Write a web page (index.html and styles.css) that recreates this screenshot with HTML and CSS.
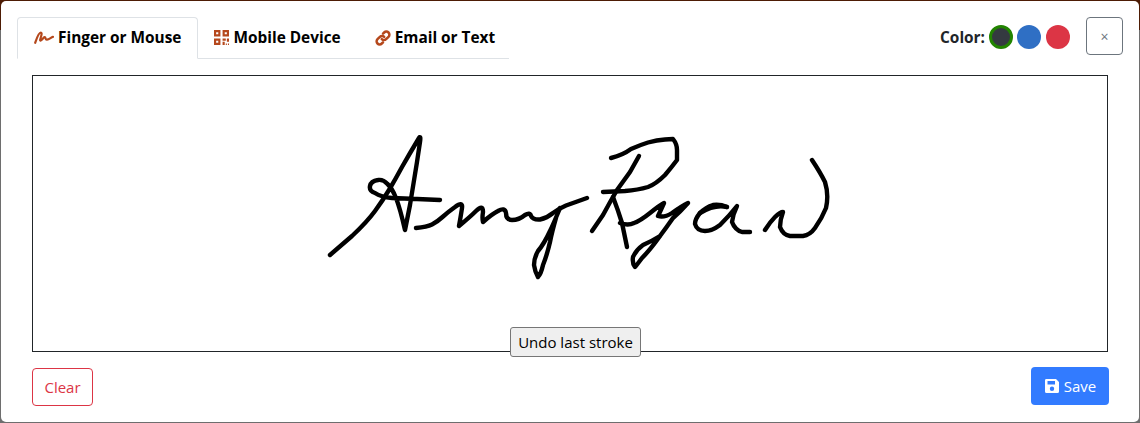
FILE: index.html
```html
<!DOCTYPE html>
<html lang="en">
<head>
<meta charset="utf-8">
<title>Signature</title>
<link rel="stylesheet" href="styles.css">
</head>
<body>
<div class="modal">
  <header class="top">
    <nav class="tabs">
      <a class="tab active"><svg class="ico" viewBox="0 0 20 13" width="20" height="13"><path d="M1.200 11.800C2.500 8 4.500 1.500 6.800 1.500c1.700 0 .2 4.500-.6 7-.4 1.500.9 1.300 2.100-.1 1.100-1.400 2.200-2.900 2.900-2 .5 1 .2 2.500 1.800 2.300 2 -.2 3.800-2 6-2.900" fill="none" stroke="currentColor" stroke-width="2.200" stroke-linecap="round" stroke-linejoin="round"/></svg><span>Finger or Mouse</span></a>
      <a class="tab"><svg class="ico" viewBox="0 0 14 14" width="15" height="15"><path fill-rule="evenodd" fill="currentColor" d="M0 0h6v6H0zM2 2v2h2V2zM8 0h6v6H8zM10 2v2h2V2zM0 8h6v6H0zM2 10v2h2v-2z"/><path fill="currentColor" d="M8 8h3v2H8zM12 8h2v3h-2zM8 11h2v3H8zM11 12.500h1v1.500h-1zM13 12.500h1v1.500h-1z"/></svg><span>Mobile Device</span></a>
      <a class="tab"><svg class="ico" viewBox="0 0 16 16" width="16" height="16"><g fill="none" stroke="currentColor" stroke-width="2.500" stroke-linecap="round"><path d="M6.800 9.200a3 3 0 0 0 4.300 0l2.400-2.400a3 3 0 0 0-4.300-4.300L8 3.700"/><path d="M9.200 6.800a3 3 0 0 0-4.300 0L2.500 9.200a3 3 0 0 0 4.300 4.300L8 12.300"/></g></svg><span>Email or Text</span></a>
    </nav>
    <div class="colors">
      <strong class="label">Color:</strong>
      <span class="dot dark"></span>
      <span class="dot blue"></span>
      <span class="dot red"></span>
    </div>
    <button class="close">×</button>
  </header>
  <main class="pad">
    <svg class="sig" viewBox="33 76 1074 275" width="1074" height="275">
      <g fill="none" stroke="#000" stroke-width="4.400" stroke-linecap="round" stroke-linejoin="round">
        <path d="M330 255L352 236Q367 222 375 211Q383 200 389 190Q395 180 402 167Q410 153 419 138Q421 135 420 142L417 162L410 205L405 230Q400 208 396 198Q392 188 387.500 184Q383 179 378 180Q371 181 370 186Q369 191 375 193Q381 197 392 198L417 199L440 200"/>
        <path d="M416 228Q427 227 432 224.500Q437 222 442.500 217Q448 212 455 207Q463 201 462 208Q461 215 459 226Q470 217 476 211Q483 204 483 212Q482 218 483 222Q492 214 498 211Q505 207 506 213Q506 220 512 220Q519 220 525 215Q530 212 531 216Q533 220 540 219.500Q547 218 553 213Q560 208 566 205.500Q573 203 580 200.500L587 198"/>
        <path d="M560 208Q553 225 550 231Q544 244 538 251Q534 258 534 265Q535 272 538 277Q541 274 543 265Q547 255 550 242Q552 232 556 218"/>
        <path d="M611 158Q623 155 631 149Q640 145 648 142.500Q657 140 665 139.500L673 139Q677 144 677 150L677 160Q671 168 665 175Q656 184 648 187Q638 190 625 191L603 192"/>
        <path d="M639 156L630 172L617 190Q610 202 603 215L592 231"/>
        <path d="M613 197Q618 210 622 223L627 247"/>
        <path d="M620 223Q628 226 634 223Q640 221 650 213Q660 205 664 203Q660 212 658 216Q664 218 672 213Q682 206 688 203Q680 212 673 218Q666 228 660 236Q650 250 642 258Q636 266 635 267Q632 263 633 257Q636 250 643 245Q652 241 660 236"/>
        <path d="M727 207Q720 204 713 205Q706 207 700 213Q695 219 695 224Q697 231 705 231Q712 231 720 225Q730 215 737 206Q733 214 732 222Q735 230 742 232L750 232"/>
        <path d="M700 213Q715 204 727 207"/>
        <path d="M765 230Q770 222 775 217Q780 212 783 212Q780 220 780 227Q783 235 790 236L803 236Q810 235 815 228Q822 218 826 208Q829 195 825 182Q820 172 812 160"/>
      </g>
    </svg>
    <button class="undo">Undo last stroke</button>
  </main>
  <footer class="foot">
    <button class="clear">Clear</button>
    <button class="save"><svg viewBox="0 0 16 16" width="16" height="16"><path fill="#fff" fill-rule="evenodd" d="M2 1h10l3 3v9.500A1.500 1.500 0 0 1 13.500 15h-11A1.500 1.500 0 0 1 1 13.500v-11A1.500 1.500 0 0 1 2 1zM3.500 3v3.500h7.500V3zM8 8.500a2.200 2.200 0 1 0 0 4.400 2.200 2.200 0 0 0 0-4.400z"/></svg><span>Save</span></button>
  </footer>
</div>
</body>
</html>
```
FILE: styles.css
```css
* { box-sizing: border-box; }
html, body { margin: 0; height: 100%; }
body {
  background: linear-gradient(#4d1c04 30px, #6e6e6e 30px);
  padding: 1px;
  overflow: hidden;
  font-family: "Open Sans", "Noto Sans", sans-serif;
  font-size: 16px;
  color: #212529;
}
.modal {
  background: #fff;
  border-radius: 5px;
  height: 421px;
  padding: 16px 16px 0;
}
.top { display: flex; align-items: flex-start; }
.tabs {
  display: flex;
  flex: none;
  width: 492px;
  height: 42px;
  border-bottom: 1px solid #dee2e6;
}
.tab {
  display: flex;
  flex: none;
  align-items: center;
  gap: 4px;
  height: 42px;
  padding: 0 16px 1px;
  border: 1px solid transparent;
  border-radius: 4px 4px 0 0;
  font-weight: 700;
  font-size: 15.4px;
  white-space: nowrap;
  color: #000;
}
.tab:nth-child(2) { padding-left: 15px; }
.tab.active { border-color: #dee2e6 #dee2e6 #fff; background: #fff; }
.ico { color: #b5481c; flex: none; }
.colors {
  margin-left: auto;
  display: flex;
  align-items: center;
  height: 24px;
  margin-top: 8px;
}
.label { font-size: 15.4px; margin-right: 4px; }
.dot { width: 24px; height: 24px; border-radius: 50%; margin-right: 4px; }
.dot + .dot + .dot { margin-left: 1px; }
.dark { background: #343a40; border: 3px solid #228400; }
.blue { background: #2f6fc4; }
.red { background: #dc3545; }
.close {
  margin-left: 12px;
  width: 37px;
  height: 38px;
  background: #fff;
  border: 1px solid #6c757d;
  border-radius: 4px;
  color: #6c757d;
  font: 14px "Open Sans", sans-serif;
  padding: 0;
}
.pad {
  position: relative;
  margin: 16px 15px 0;
  height: 277px;
  border: 1px solid #212529;
}
.sig { display: block; }
.undo {
  position: absolute;
  left: 477px;
  top: 251px;
  width: 131px;
  height: 30px;
  padding: 0;
  background: #efefef;
  border: 1px solid #767676;
  border-radius: 3px;
  color: #000;
  font: 15px "Open Sans", sans-serif;
}
.foot {
  display: flex;
  justify-content: space-between;
  align-items: flex-start;
  margin: 15px 14px 0 15px;
}
.clear {
  margin-top: 1px;
  width: 61px;
  height: 38px;
  background: #fff;
  border: 1px solid #dc3545;
  border-radius: 4px;
  color: #dc3545;
  font: 15px "Open Sans", sans-serif;
  padding: 0;
}
.save {
  display: flex;
  align-items: center;
  justify-content: center;
  gap: 4px;
  width: 78px;
  height: 38px;
  background: #327bff;
  border: 0;
  border-radius: 4px;
  color: #fff;
  font: 15px "Open Sans", sans-serif;
  padding: 0;
}
```
